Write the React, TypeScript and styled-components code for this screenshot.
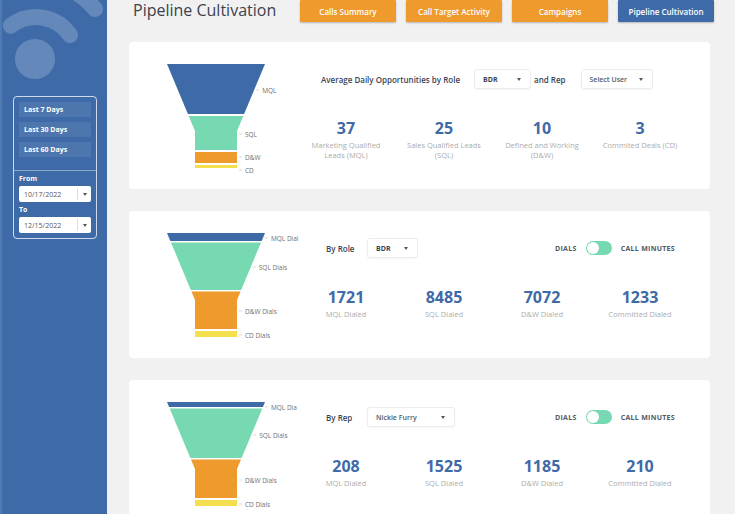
import React from "react";
import styled, { createGlobalStyle } from "styled-components";

const Colors = {
  sidebar: "#3e6ba8",
  page: "#f1f1f1",
  orange: "#ee9a2c",
  blue: "#3e6aa8",
  green: "#77d9b1",
  yellow: "#f4df4f",
  title: "#3c424c",
  heading: "#3b4456",
  muted: "#acacac",
  funnelText: "#6f6f6f",
};

const GlobalStyle = createGlobalStyle`
  html, body {
    margin: 0;
    padding: 0;
  }
  body {
    font-family: "Open Sans", "Liberation Sans", sans-serif;
    background: ${Colors.page};
  }
  * {
    box-sizing: border-box;
  }
`;

const Page = styled.div`
  display: flex;
  width: 735px;
  height: 514px;
  overflow: hidden;
  background: ${Colors.page};
`;

/* ---------- sidebar ---------- */

const Sidebar = styled.aside`
  width: 107px;
  flex-shrink: 0;
  background: ${Colors.sidebar};
  border-left: 2px solid #4f7bb3;
  display: flex;
  flex-direction: column;
`;

const Decor = styled.svg`
  display: block;
  width: 105px;
  height: 96px;
  flex-shrink: 0;
`;

const FilterBox = styled.div`
  margin-left: 11px;
  width: 84px;
  border: 1px solid rgba(255, 255, 255, 0.75);
  border-radius: 4px;
  padding: 5px;
  display: flex;
  flex-direction: column;
`;

const RangeButton = styled.div`
  height: 15px;
  margin-bottom: 5px;
  padding-left: 5px;
  display: flex;
  align-items: center;
  background: rgba(255, 255, 255, 0.08);
  color: #fff;
  font-size: 7px;
  font-weight: 700;

  &:last-of-type {
    margin-bottom: 0;
  }
`;

const Divider = styled.div`
  height: 1px;
  margin: 8px -5px 0;
  background: rgba(255, 255, 255, 0.4);
`;

const FieldLabel = styled.div`
  margin-top: 3px;
  line-height: 10px;
  font-size: 7px;
  font-weight: 700;
  color: #fff;
`;

const DateInput = styled.div`
  margin-top: 2px;
  height: 16px;
  display: flex;
  align-items: stretch;
  background: #fff;
  border-radius: 2px;
  font-size: 7px;
  color: #555;
`;

const DateText = styled.div`
  flex: 1;
  display: flex;
  align-items: center;
  padding-left: 5px;
`;

const DateToggle = styled.div`
  width: 14px;
  margin: 2px 0;
  border-left: 1px solid #dedede;
  display: flex;
  align-items: center;
  justify-content: center;
`;

const Caret = styled.span`
  width: 0;
  height: 0;
  border-left: 2.5px solid transparent;
  border-right: 2.5px solid transparent;
  border-top: 3px solid #555;
`;

/* ---------- main ---------- */

const Main = styled.main`
  flex: 1;
  padding: 0 21px 0 22px;
  display: flex;
  flex-direction: column;
`;

const TopBar = styled.div`
  height: 42px;
  flex-shrink: 0;
  display: flex;
  align-items: flex-start;
`;

const Title = styled.h1`
  margin: 0 0 0 4px;
  font-size: 16px;
  line-height: 20px;
  font-weight: 400;
  color: ${Colors.title};
`;

const NavGroup = styled.nav`
  margin-left: auto;
  display: flex;
  gap: 10px;
`;

const NavButton = styled.div<{ $active?: boolean }>`
  width: 96px;
  height: 22px;
  display: flex;
  align-items: center;
  justify-content: center;
  background: ${(p) => (p.$active ? Colors.blue : Colors.orange)};
  color: #fff;
  font-size: 8px;
  font-weight: 600;
  border-radius: 1px;
  box-shadow: 0 1px 2px rgba(0, 0, 0, 0.25);
`;

const Card = styled.section`
  height: 147px;
  margin: 0 4px 22px 0;
  background: #fff;
  border-radius: 4px;
  display: flex;
  flex-shrink: 0;
`;

const FunnelSvg = styled.svg`
  display: block;
  width: 171px;
  height: 147px;
  flex-shrink: 0;
`;

const FunnelText = styled.text`
  font-family: "Open Sans", "Liberation Sans", sans-serif;
  font-size: 6.5px;
  fill: ${Colors.funnelText};
`;

const RightPane = styled.div`
  flex: 1;
  padding-top: 27px;
  display: flex;
  flex-direction: column;
`;

const HeaderRow = styled.div<{ $indent: number }>`
  height: 20px;
  display: flex;
  align-items: center;
  padding-left: ${(p) => p.$indent}px;
  padding-right: 35px;
`;

const Heading = styled.div`
  font-size: 8px;
  font-weight: 600;
  color: ${Colors.heading};
  margin-right: 14px;
`;

const Connector = styled.div`
  font-size: 8px;
  font-weight: 600;
  color: ${Colors.heading};
  margin: 0 15px 0 3px;
`;

const FilterLabel = styled.div`
  width: 41px;
  font-size: 8px;
  font-weight: 600;
  color: ${Colors.heading};
`;

const Select = styled.div<{ $width: number; $strong?: boolean }>`
  width: ${(p) => p.$width}px;
  height: 20px;
  padding: 0 9px 0 8px;
  display: flex;
  align-items: center;
  justify-content: space-between;
  background: #fff;
  border: 1px solid #ececec;
  border-radius: 3px;
  box-shadow: 0 1px 2px rgba(0, 0, 0, 0.04);
  font-size: 7px;
  font-weight: ${(p) => (p.$strong ? 700 : 600)};
  color: ${(p) => (p.$strong ? "#3d4350" : "#555a63")};
`;

const ModeSwitch = styled.div`
  margin-left: auto;
  display: flex;
  align-items: center;
  gap: 9px;
`;

const ModeText = styled.div`
  font-size: 7px;
  font-weight: 700;
  letter-spacing: 0.3px;
  color: #535865;
`;

const Toggle = styled.div`
  width: 26px;
  height: 14px;
  border-radius: 7px;
  background: ${Colors.green};
  padding: 1px;
  display: flex;

  &::before {
    content: "";
    width: 12px;
    height: 12px;
    border-radius: 50%;
    background: #fff;
  }
`;

const StatGrid = styled.div`
  margin: 29px 0 0 -3px;
  display: grid;
  grid-template-columns: repeat(4, 98px);
`;

const Stat = styled.div`
  text-align: center;
`;

const StatValue = styled.div`
  font-size: 16px;
  line-height: 20px;
  font-weight: 700;
  color: ${Colors.blue};
`;

const StatLabel = styled.div`
  margin-top: 2px;
  font-size: 7.5px;
  line-height: 10px;
  color: ${Colors.muted};
  white-space: pre-line;
`;

/* ---------- funnel ---------- */

type Segment = { from: number; to: number; color: string };
type FunnelLabel = { text: string; y: number };

const TOP = 22;
const NECK = 67;

const xLeft = (o: number) => (o < NECK ? 38 + (o * 28) / NECK : 66);
const xRight = (o: number) => (o < NECK ? 136 - (o * 28) / NECK : 108);

const segmentPoints = (a: number, b: number) => {
  const crosses = a < NECK && b > NECK;
  const pts: number[][] = [
    [xLeft(a), a],
    [xRight(a), a],
  ];
  if (crosses) pts.push([108, NECK]);
  pts.push([xRight(b), b], [xLeft(b), b]);
  if (crosses) pts.push([66, NECK]);
  return pts.map(([x, y]) => `${x.toFixed(1)},${(y + TOP).toFixed(1)}`).join(" ");
};

const Funnel = ({ segments, labels }: { segments: Segment[]; labels: FunnelLabel[] }) => (
  <FunnelSvg viewBox="0 0 171 147">
    {segments.map((s, i) => (
      <polygon key={i} points={segmentPoints(s.from, s.to)} fill={s.color} />
    ))}
    {labels.map((l) => {
      const edge = xRight(Math.min(l.y, 104));
      return (
        <g key={l.text}>
          <line x1={edge + 2} x2={edge + 5} y1={l.y + TOP} y2={l.y + TOP} stroke="#cfcfcf" strokeWidth={0.8} />
          <FunnelText x={edge + 8} y={l.y + TOP} dominantBaseline="central">
            {l.text}
          </FunnelText>
        </g>
      );
    })}
  </FunnelSvg>
);

const seg = (bounds: number[][]): Segment[] => {
  const colors = [Colors.blue, Colors.green, Colors.orange, Colors.yellow];
  return bounds.map(([from, to], i) => ({ from, to, color: colors[i] }));
};

type StatItem = { value: string; label: string };

const Stats = ({ items }: { items: StatItem[] }) => (
  <StatGrid>
    {items.map((s) => (
      <Stat key={s.label}>
        <StatValue>{s.value}</StatValue>
        <StatLabel>{s.label}</StatLabel>
      </Stat>
    ))}
  </StatGrid>
);

const DialsSwitch = () => (
  <ModeSwitch>
    <ModeText>DIALS</ModeText>
    <Toggle />
    <ModeText>CALL MINUTES</ModeText>
  </ModeSwitch>
);

const DateField = ({ value }: { value: string }) => (
  <DateInput>
    <DateText>{value}</DateText>
    <DateToggle>
      <Caret />
    </DateToggle>
  </DateInput>
);

export default function App() {
  return (
    <>
      <GlobalStyle />
      <Page>
        <Sidebar>
          <Decor viewBox="2 0 105 96">
            <circle cx={35} cy={59} r={20} fill="rgba(255,255,255,0.2)" />
            <path
              d="M 10.8 25.7 A 41 41 0 0 1 70 35.1"
              fill="none"
              stroke="rgba(255,255,255,0.2)"
              strokeWidth={16}
              strokeLinecap="round"
            />
            <path
              d="M -11 -2 A 77 77 0 0 1 95 9"
              fill="none"
              stroke="rgba(255,255,255,0.2)"
              strokeWidth={16}
              strokeLinecap="round"
            />
          </Decor>
          <FilterBox>
            <RangeButton>Last 7 Days</RangeButton>
            <RangeButton>Last 30 Days</RangeButton>
            <RangeButton>Last 60 Days</RangeButton>
            <Divider />
            <FieldLabel>From</FieldLabel>
            <DateField value="10/17/2022" />
            <FieldLabel>To</FieldLabel>
            <DateField value="12/15/2022" />
          </FilterBox>
        </Sidebar>

        <Main>
          <TopBar>
            <Title>Pipeline Cultivation</Title>
            <NavGroup>
              <NavButton>Calls Summary</NavButton>
              <NavButton>Call Target Activity</NavButton>
              <NavButton>Campaigns</NavButton>
              <NavButton $active>Pipeline Cultivation</NavButton>
            </NavGroup>
          </TopBar>

          <Card>
            <Funnel
              segments={seg([
                [0, 50],
                [52, 86],
                [88, 99],
                [101, 104],
              ])}
              labels={[
                { text: "MQL", y: 26 },
                { text: "SQL", y: 70 },
                { text: "D&W", y: 93 },
                { text: "CD", y: 106 },
              ]}
            />
            <RightPane>
              <HeaderRow $indent={21}>
                <Heading>Average Daily Opportunities by Role</Heading>
                <Select $width={57} $strong>
                  BDR <Caret />
                </Select>
                <Connector>and Rep</Connector>
                <Select $width={72}>
                  Select User <Caret />
                </Select>
              </HeaderRow>
              <Stats
                items={[
                  { value: "37", label: "Marketing Qualified\nLeads (MQL)" },
                  { value: "25", label: "Sales Qualified Leads\n(SQL)" },
                  { value: "10", label: "Defined and Working\n(D&W)" },
                  { value: "3", label: "Commited Deals (CD)" },
                ]}
              />
            </RightPane>
          </Card>

          <Card>
            <Funnel
              segments={seg([
                [0, 8],
                [9.5, 57],
                [58.5, 96],
                [98, 104],
              ])}
              labels={[
                { text: "MQL Dial", y: 5 },
                { text: "SQL Dials", y: 34 },
                { text: "D&W Dials", y: 78 },
                { text: "CD Dials", y: 102 },
              ]}
            />
            <RightPane>
              <HeaderRow $indent={26}>
                <FilterLabel>By Role</FilterLabel>
                <Select $width={51} $strong>
                  BDR <Caret />
                </Select>
                <DialsSwitch />
              </HeaderRow>
              <Stats
                items={[
                  { value: "1721", label: "MQL Dialed" },
                  { value: "8485", label: "SQL Dialed" },
                  { value: "7072", label: "D&W Dialed" },
                  { value: "1233", label: "Committed Dialed" },
                ]}
              />
            </RightPane>
          </Card>

          <Card>
            <Funnel
              segments={seg([
                [0, 5],
                [6.5, 56],
                [57.5, 96],
                [98, 104],
              ])}
              labels={[
                { text: "MQL Dia", y: 5 },
                { text: "SQL Dials", y: 33 },
                { text: "D&W Dials", y: 78 },
                { text: "CD Dials", y: 102 },
              ]}
            />
            <RightPane>
              <HeaderRow $indent={26}>
                <FilterLabel>By Rep</FilterLabel>
                <Select $width={88}>
                  Nickie Furry <Caret />
                </Select>
                <DialsSwitch />
              </HeaderRow>
              <Stats
                items={[
                  { value: "208", label: "MQL Dialed" },
                  { value: "1525", label: "SQL Dialed" },
                  { value: "1185", label: "D&W Dialed" },
                  { value: "210", label: "Committed Dialed" },
                ]}
              />
            </RightPane>
          </Card>
        </Main>
      </Page>
    </>
  );
}
